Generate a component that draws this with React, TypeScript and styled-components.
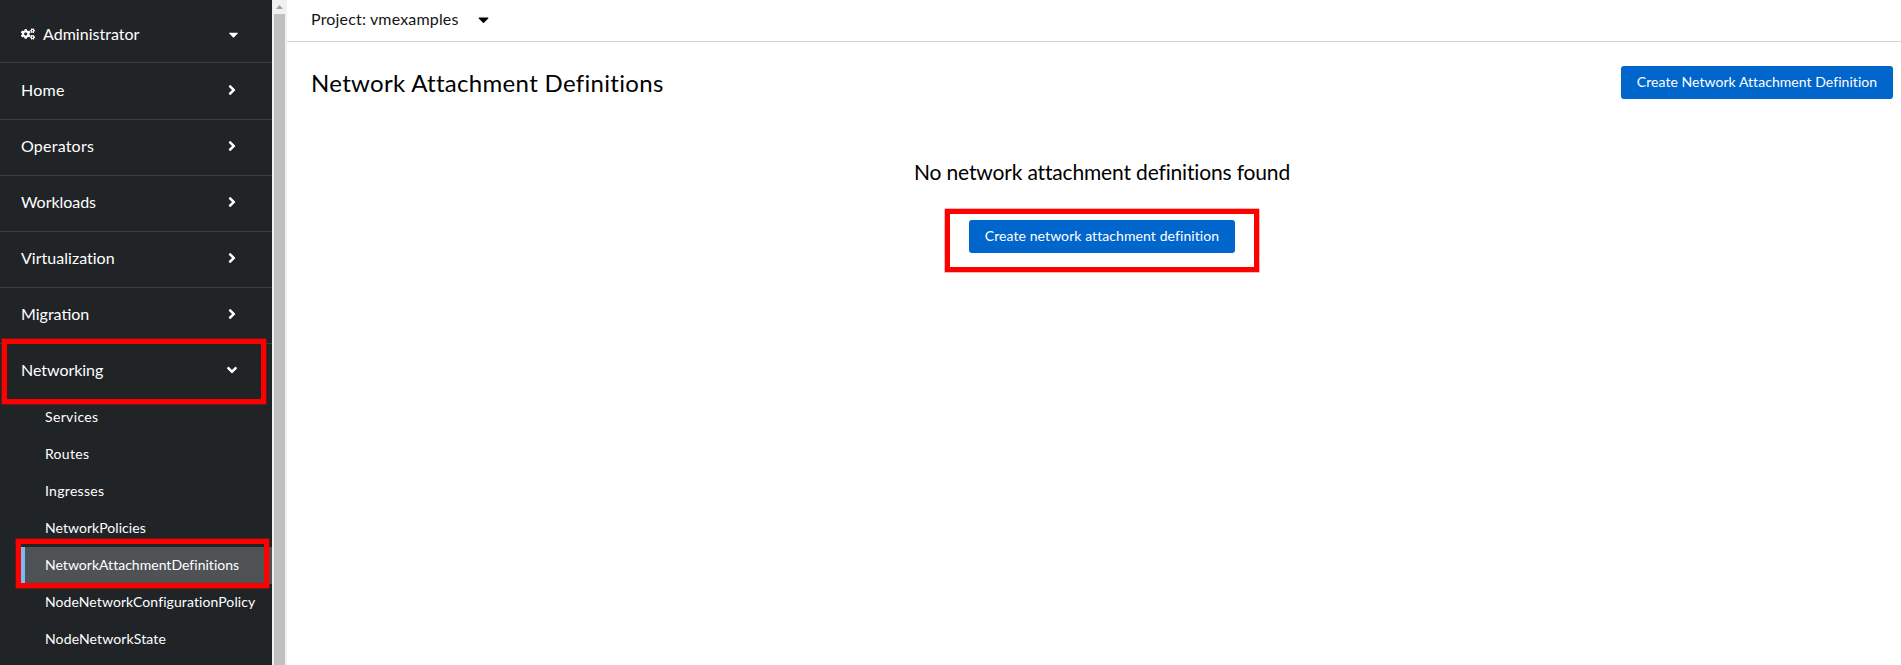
import React from 'react';
import styled, { createGlobalStyle, css } from 'styled-components';
import { FaAngleDown, FaAngleRight, FaCaretDown, FaCogs } from 'react-icons/fa';

const GlobalStyle = createGlobalStyle`
  *, *::before, *::after { box-sizing: border-box; }
  body {
    margin: 0;
    background: #fff;
    color: #151515;
    font-family: Lato, "Liberation Sans", sans-serif;
    font-size: 16px;
    overflow: hidden;
  }
`;

const Page = styled.div`
  display: flex;
  height: 665px;
  overflow: hidden;
`;

const Sidebar = styled.nav`
  position: relative;
  flex: 0 0 272px;
  background: #212427;
  color: #fff;
`;

const Label = styled.span<{ $tracking: number }>`
  letter-spacing: ${({ $tracking }) => $tracking}px;
  white-space: nowrap;
`;

const Perspective = styled.div`
  display: flex;
  align-items: center;
  height: 63px;
  padding: 6px 31px 0 21px;
  border-bottom: 1px solid #3c3f42;
  line-height: 24px;

  ${Label} { margin-left: 8px; flex: 1; }
`;

const NavSection = styled.div<{ $height: number; $open?: boolean }>`
  display: flex;
  align-items: center;
  justify-content: space-between;
  height: ${({ $height }) => $height}px;
  padding: 0 32px 3px 21px;
  border-bottom: ${({ $open }) => ($open ? '0' : '1px solid #3c3f42')};
  line-height: 24px;
`;

const SubList = styled.div`
  display: flex;
  flex-direction: column;
  padding-left: 21px;
`;

const SubItem = styled.div<{ $current?: boolean }>`
  display: flex;
  align-items: center;
  height: 37px;
  padding: 0 0 2px 20px;
  border-left: 4px solid transparent;
  font-size: 14px;
  line-height: 21px;
  ${({ $current }) =>
    $current &&
    css`
      background: #4f5255;
      border-left-color: #73bcf7;
    `}
`;

const ScrollTrack = styled.div`
  flex: 0 0 15px;
  display: flex;
  flex-direction: column;
  padding: 0 2px;
  background: #f1f1f1;
`;

const ScrollArrow = styled.div`
  flex: 0 0 14px;
  padding: 5px 0 0 2px;
  svg { display: block; }
`;

const ScrollThumb = styled.div`
  flex: 1;
  background: #c1c1c1;
`;

const Main = styled.main`
  flex: 1;
  min-width: 0;
`;

const ProjectBar = styled.div`
  display: flex;
  align-items: center;
  gap: 16px;
  height: 42px;
  padding: 0 24px 3px;
  border-bottom: 1px solid #d2d2d2;
  line-height: 24px;
`;

const TitleRow = styled.header`
  display: flex;
  align-items: center;
  justify-content: space-between;
  height: 81px;
  padding: 0 8px 0 24px;
`;

const Title = styled.h1`
  margin: 0;
  padding-bottom: 1px;
  color: #000;
  font-size: 24px;
  font-weight: 400;
  line-height: 31px;
`;

const Button = styled.button`
  height: 33px;
  padding: 0 0 2px;
  border: 0;
  border-radius: 3px;
  background: #06c;
  color: #fff;
  font: inherit;
  font-size: 14px;
  line-height: 21px;
`;

const CreateButton = styled(Button)`width: 272px;`;
const EmptyButton = styled(Button)`width: 266px;`;

const EmptyState = styled.section`
  display: flex;
  flex-direction: column;
  align-items: center;
  padding: 36px 0 0 16px;
`;

const EmptyTitle = styled.h2`
  margin: 0;
  color: #000;
  font-size: 21px;
  font-weight: 400;
  line-height: 26px;
`;

const EmptyAction = styled.div`
  position: relative;
  display: flex;
  margin-top: 35px;
`;

const Highlight = styled.div<{ $x: number; $y: number; $w: number; $h: number }>`
  position: absolute;
  left: ${({ $x }) => $x}px;
  top: ${({ $y }) => $y}px;
  width: ${({ $w }) => $w}px;
  height: ${({ $h }) => $h}px;
  border: 5px solid #f00;
  box-shadow: 0 0 0 0.6px rgba(255, 0, 0, 0.5);
  pointer-events: none;
`;

const sections: { name: string; tracking: number; height: number; open?: boolean }[] = [
  { name: 'Home', tracking: 0.25, height: 57 },
  { name: 'Operators', tracking: 0.22, height: 56 },
  { name: 'Workloads', tracking: -0.05, height: 56 },
  { name: 'Virtualization', tracking: 0.02, height: 56 },
  { name: 'Migration', tracking: 0, height: 56 },
  { name: 'Networking', tracking: -0.04, height: 55, open: true },
];

const subItems: { name: string; tracking: number; current?: boolean }[] = [
  { name: 'Services', tracking: 0.36 },
  { name: 'Routes', tracking: 0.3 },
  { name: 'Ingresses', tracking: 0.3 },
  { name: 'NetworkPolicies', tracking: 0.05 },
  { name: 'NetworkAttachmentDefinitions', tracking: 0.02, current: true },
  { name: 'NodeNetworkConfigurationPolicy', tracking: 0.09 },
  { name: 'NodeNetworkState', tracking: 0.13 },
];

export default function App() {
  return (
    <>
      <GlobalStyle />
      <Page>
        <Sidebar>
          <Perspective>
            <FaCogs size={14} />
            <Label $tracking={0.02}>Administrator</Label>
            <FaCaretDown size={15} />
          </Perspective>
          {sections.map(({ name, tracking, height, open }) => (
            <NavSection key={name} $height={height} $open={open}>
              <Label $tracking={tracking}>{name}</Label>
              {open ? <FaAngleDown size={16} /> : <FaAngleRight size={16} />}
            </NavSection>
          ))}
          <SubList>
            {subItems.map(({ name, tracking, current }) => (
              <SubItem key={name} $current={current}>
                <Label $tracking={tracking}>{name}</Label>
              </SubItem>
            ))}
          </SubList>
          <Highlight $x={2} $y={339} $w={264} $h={65} />
          <Highlight $x={16} $y={539} $w={253} $h={49} />
        </Sidebar>
        <ScrollTrack>
          <ScrollArrow>
            <svg width="7" height="4" viewBox="0 0 7 4">
              <path d="M0 4 3.5 0 7 4Z" fill="#a3a3a3" />
            </svg>
          </ScrollArrow>
          <ScrollThumb />
        </ScrollTrack>
        <Main>
          <ProjectBar>
            <Label $tracking={0.17}>Project: vmexamples</Label>
            <FaCaretDown size={17} color="#000" />
          </ProjectBar>
          <TitleRow>
            <Title>
              <Label $tracking={0.31}>Network Attachment Definitions</Label>
            </Title>
            <CreateButton>
              <Label $tracking={0.05}>Create Network Attachment Definition</Label>
            </CreateButton>
          </TitleRow>
          <EmptyState>
            <EmptyTitle>
              <Label $tracking={-0.16}>No network attachment definitions found</Label>
            </EmptyTitle>
            <EmptyAction>
              <EmptyButton>
                <Label $tracking={0.08}>Create network attachment definition</Label>
              </EmptyButton>
              <Highlight $x={-24} $y={-11} $w={314} $h={63} />
            </EmptyAction>
          </EmptyState>
        </Main>
      </Page>
    </>
  );
}
